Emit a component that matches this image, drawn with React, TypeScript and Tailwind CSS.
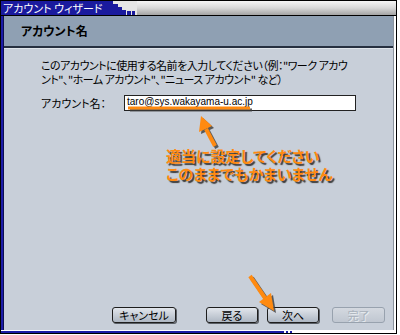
const jp = "[font-family:'Noto_Sans_CJK_JP',sans-serif] [font-feature-settings:'palt']";

function TitleBar() {
  return (
    <div className="flex h-[15px] border-b border-black">
      <div className="flex w-[106px] items-center bg-[#1a1a9e] pl-[2px] text-[11px] leading-none text-white">
        <span className="whitespace-nowrap">アカウント ウィザード</span>
      </div>
      <svg width="30" height="14" viewBox="0 0 30 14" className="shrink-0">
        <rect width="30" height="14" fill="#e6e6e6" />
        <rect x="0" y="0" width="6" height="14" fill="#1a1a9e" />
        <rect x="6" y="3" width="5" height="11" fill="#1a1a9e" />
        <rect x="11" y="6" width="4" height="8" fill="#1a1a9e" />
        <rect x="15" y="9" width="4" height="5" fill="#1a1a9e" />
        <rect x="20" y="10" width="4" height="4" fill="#1a1a9e" />
        <rect x="25" y="10" width="3" height="4" fill="#1a1a9e" />
      </svg>
      <div className="flex-1 bg-gradient-to-b from-[#f6f6f6] via-[#d8d8d8] to-[#a4a4a4]" />
    </div>
  );
}

function Button({ label, width, disabled }: { label: string; width: string; disabled?: boolean }) {
  return (
    <div
      className={`flex h-[16px] items-center justify-center rounded-[3px] border bg-gradient-to-b text-[11px] leading-none ${width} ${
        disabled
          ? "border-[#98a2ae] from-[#d4d9e0] to-[#c0c7d1] text-[#a9b1bb] [text-shadow:1px_1px_0_#e8ecf0]"
          : "border-[#1e1e1e] from-[#e2e6ec] to-[#aeb7c3] text-black [box-shadow:1px_1px_0_#5a5f66]"
      }`}
    >
      {label}
    </div>
  );
}

export default function App() {
  return (
    <div className={`relative h-[335px] w-[400px] bg-white ${jp}`}>
      <div className="flex h-[334px] w-[397px] flex-col border border-black">
        <TitleBar />
        <div className="flex flex-1">
          <div className="w-[3px] bg-[#1c1ca6] border-r border-[#0c0c50]" />
          <div className="flex flex-1 flex-col border-r border-[#8a929c]">
            <div className="flex h-[32px] items-center border-b-2 border-[#263040] bg-[#8fa0b3] pl-[17px] text-[12px] font-bold text-black">
              アカウント名
            </div>
            <div className="flex flex-1 flex-col bg-[#c8cfd9] border-t border-[#dfe4ea]">
              <div className="whitespace-nowrap pl-[37px] pt-[9px] text-[11px] leading-[14px] tracking-[-0.5px] text-black">
                このアカウントに使用する名前を入力してください（例："ワーク アカウ
                <br />
                ント"、"ホーム アカウント"、"ニュース アカウント" など）
              </div>
              <div className="mt-[9px] flex items-center pl-[37px]">
                <span className="w-[83px] text-[11px] text-black">アカウント名：</span>
                <div className="h-[16px] w-[232px] border border-[#222] bg-white pl-[2px] [font-family:'Liberation_Sans',sans-serif] text-[10px] leading-[12px] text-black">
                  taro@sys.wakayama-u.ac.jp
                </div>
              </div>
              <div className="ml-[162px] mt-[35px] whitespace-nowrap text-[15px] font-bold leading-[18px] text-[#ff8a10] [text-shadow:2px_2px_1px_#3c3c3c]">
                適当に設定してください
                <br />
                このままでもかまいません
              </div>
              <div className="mb-[7px] ml-[108px] mt-auto flex">
                <Button label="キャンセル" width="w-[64px]" />
                <div className="ml-[30px]">
                  <Button label="戻る" width="w-[52px]" />
                </div>
                <div className="ml-[9px]">
                  <Button label="次へ" width="w-[52px]" />
                </div>
                <div className="ml-[13px]">
                  <Button label="完了" width="w-[53px]" disabled />
                </div>
              </div>
            </div>
          </div>
          <div className="w-[2px] bg-white" />
        </div>
        <div className="flex h-[3px] border-t border-white">
          <div className="w-[280px] bg-[#1c1ca6]" />
          <svg width="12" height="2" viewBox="0 0 12 2" className="shrink-0">
            <rect x="0" y="0" width="3" height="2" fill="#1c1ca6" />
            <rect x="5" y="0" width="2" height="2" fill="#1c1ca6" />
            <rect x="9" y="0" width="2" height="2" fill="#1c1ca6" />
          </svg>
          <div className="flex-1 bg-white" />
        </div>
      </div>

      {/* orange annotations over the dialog */}
      <svg className="pointer-events-none absolute left-0 top-0" width="400" height="335" viewBox="0 0 400 335">
        <g fill="#3c3c3c" stroke="#3c3c3c" opacity="0.8" transform="translate(2 2)">
          <line x1="128" y1="108" x2="250" y2="108" strokeWidth="3" />
          <line x1="215" y1="146" x2="206" y2="129" strokeWidth="4" />
          <polygon points="201,116 212,126 199,132" stroke="none" />
          <line x1="250" y1="276" x2="265" y2="298" strokeWidth="4" />
          <polygon points="274,311 271,293 259,302" stroke="none" />
        </g>
        <g fill="#ff8a10" stroke="#ff8a10">
          <line x1="128" y1="108" x2="250" y2="108" strokeWidth="3" />
          <line x1="215" y1="146" x2="206" y2="129" strokeWidth="4" />
          <polygon points="201,116 212,126 199,132" stroke="none" />
          <line x1="250" y1="276" x2="265" y2="298" strokeWidth="4" />
          <polygon points="274,311 271,293 259,302" stroke="none" />
        </g>
      </svg>
    </div>
  );
}
